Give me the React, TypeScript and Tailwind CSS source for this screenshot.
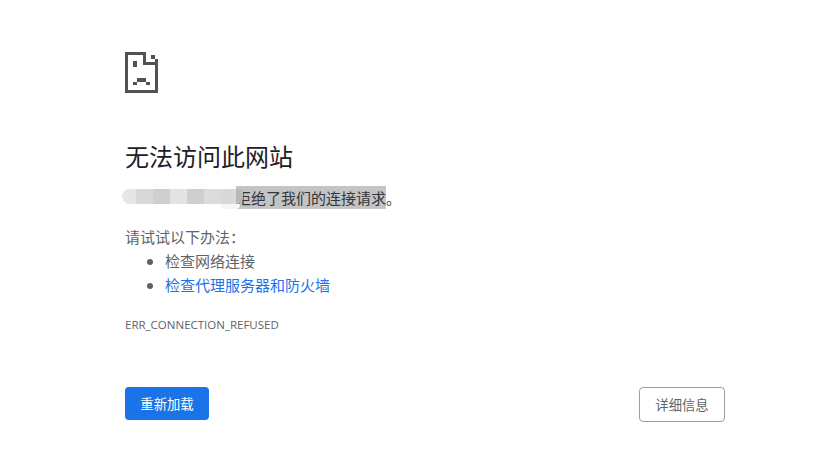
import React from 'react';

const cjk = { fontFamily: '"Noto Sans CJK SC", "Noto Sans", sans-serif' };

const mosaic = [
  'w-[14px] bg-[#e6e6e6] rounded-l-[8px]',
  'w-[17px] bg-[#d9d9dc]',
  'w-[17px] bg-[#cfcfcf]',
  'w-[17px] bg-[#e3e3e3]',
  'w-[17px] bg-[#cfcfd1]',
  'w-[17px] bg-[#dcdcdc]',
  'w-[15px] bg-[#d9d9da]',
];

const SadPage: React.FC = () => (
  <svg className="block w-[33px] h-[41px]" viewBox="45 35 100 125" fill="#525252" shapeRendering="crispEdges">
    <rect x="45" y="35" width="65" height="10" />
    <rect x="45" y="35" width="10" height="125" />
    <rect x="45" y="150" width="100" height="10" />
    <rect x="135" y="55" width="10" height="105" />
    <rect x="100" y="35" width="10" height="40" />
    <rect x="100" y="65" width="45" height="10" />
    <rect x="125" y="45" width="10" height="10" />
    <rect x="70" y="62" width="10" height="18" />
    <rect x="80" y="115" width="30" height="10" />
    <rect x="70" y="125" width="10" height="10" />
    <rect x="110" y="125" width="10" height="10" />
  </svg>
);

export default function App() {
  return (
    <div className="w-[833px] h-[458px] bg-white overflow-hidden pl-[125px] pr-[108px] pt-[52px] text-[#5f6368]" style={cjk}>
      <SadPage />

      <h1 className="mt-[45px] text-[24px] leading-[36px] font-normal text-[#202124]">无法访问此网站</h1>

      <div className="relative mt-[11px] h-[24px] text-[15px] pl-[111px] whitespace-nowrap flex items-start">
        <span className="mt-[1px] h-[23px] leading-[23px] bg-[#c4c4c4] text-[#33363a]">拒绝了我们的连接请求</span>
        <span className="mt-[1px] leading-[23px] text-[#33363a]">。</span>
        <div className="absolute left-[-3px] top-[4px] h-[15px] flex">
          {mosaic.map((c, i) => (
            <div key={i} className={c} />
          ))}
          <div className="w-[7px] bg-[#b9b9b9] rounded-br-[6px]" />
        </div>
        {/* smear under the blurred part, hides the foot of the first glyph */}
        <div className="absolute left-[96px] top-[19px] w-[19px] h-[5px] bg-[#f6f6f4] rounded-br-[4px]" />
      </div>

      <p className="mt-[16px] text-[15px] leading-[24px]">请试试以下办法：</p>
      <ul className="list-disc pl-[40px] text-[15px] leading-[24px]">
        <li>检查网络连接</li>
        <li>
          <a className="text-[#1a73e8]">检查代理服务器和防火墙</a>
        </li>
      </ul>

      <div className="mt-[20px] text-[11.5px] leading-[16px] text-[#5f6368]" style={{ fontFamily: '"Open Sans", sans-serif' }}>
        ERR_CONNECTION_REFUSED
      </div>

      <div className="mt-[54px] flex justify-between items-start">
        <button className="w-[84px] h-[33px] rounded-[4px] bg-[#1a73e8] text-white text-[13.33px]">重新加载</button>
        <button className="w-[86px] h-[35px] rounded-[4px] border border-[#9aa0a6] text-[#5f6368] text-[13.33px]">详细信息</button>
      </div>
    </div>
  );
}
